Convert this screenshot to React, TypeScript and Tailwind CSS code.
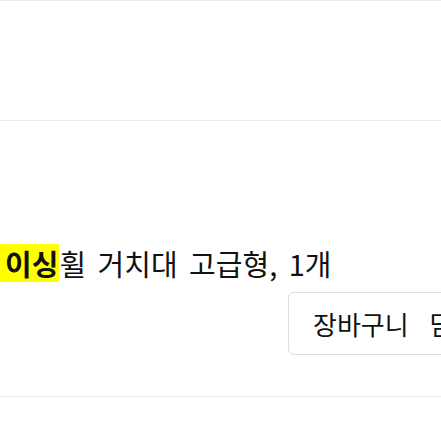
export default function App() {
  return (
    <div
      className="w-[441px] h-[441px] overflow-hidden bg-white text-[#111]"
      style={{ fontFamily: '"Noto Sans CJK KR", "Noto Sans", sans-serif' }}
    >
      <div className="w-[540px]">
        {/* previous row (empty) */}
        <div className="h-[121px] border-t border-b border-[#ebebeb]" />

        {/* cart item row */}
        <div className="pt-[123px] pb-[41px] border-b border-[#ebebeb]">
          <div className="flex items-center h-[38px] text-[29px] leading-[38px] whitespace-nowrap [word-spacing:5px]">
            <mark className="inline-block h-[38px] bg-[#ffff00] pl-[5px] pr-px font-bold text-[#111]">
              이싱
            </mark>
            <span>휠 거치대 고급형, 1개</span>
          </div>
          <div className="mt-[10px] flex justify-end">
            <button className="h-[63px] w-[252px] shrink-0 rounded-md border border-[#dedede] bg-white pl-[24px] text-left text-[26px] whitespace-nowrap [word-spacing:15px]">
              장바구니 담기
            </button>
          </div>
        </div>
      </div>
    </div>
  )
}
